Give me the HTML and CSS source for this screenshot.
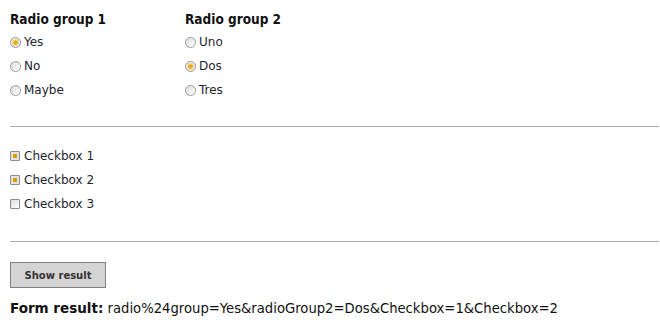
FILE: index.html
```html
<!DOCTYPE html>
<html lang="en">
<head>
    <meta charset="UTF-8">
    <title>Form</title>
    <link rel="stylesheet" href="styles.css">
</head>
<body>
    <form class="form" id="demoForm">
        <div class="groups">
            <div class="group">
                <h2>Radio group 1</h2>
                <label class="option"><input type="radio" name="radio$group" value="Yes" checked> Yes</label>
                <label class="option"><input type="radio" name="radio$group" value="No"> No</label>
                <label class="option"><input type="radio" name="radio$group" value="Maybe"> Maybe</label>
            </div>
            <div class="group">
                <h2>Radio group 2</h2>
                <label class="option"><input type="radio" name="radioGroup2" value="Uno"> Uno</label>
                <label class="option"><input type="radio" name="radioGroup2" value="Dos" checked> Dos</label>
                <label class="option"><input type="radio" name="radioGroup2" value="Tres"> Tres</label>
            </div>
        </div>
        <hr>
        <div class="checks">
            <label class="option"><input type="checkbox" name="Checkbox" value="1" checked> Checkbox 1</label>
            <label class="option"><input type="checkbox" name="Checkbox" value="2" checked> Checkbox 2</label>
            <label class="option"><input type="checkbox" name="Checkbox" value="3"> Checkbox 3</label>
        </div>
        <hr>
        <button type="submit" class="button">Show result</button>
        <p class="result"><strong>Form result:</strong> <span id="result">radio%24group=Yes&amp;radioGroup2=Dos&amp;Checkbox=1&amp;Checkbox=2</span></p>
    </form>
</body>
</html>
```

FILE: styles.css
```css
body {
    font-family: "DejaVu Sans", Verdana, sans-serif;
    font-size: 12px;
    color: #1e2430;
    background-color: #ffffff;
    margin: 0;
    padding: 10px 1px 10px 10px;
}

.groups {
    display: flex;
}

.group {
    width: 175px;
}

h2 {
    font-family: "DejaVu Sans Condensed", "DejaVu Sans", sans-serif;
    font-size: 13.5px;
    font-weight: bold;
    color: #111;
    margin: 1px 0 3px 0;
}

.option {
    display: flex;
    align-items: center;
    height: 24px;
    gap: 3px;
}

input[type="radio"],
input[type="checkbox"] {
    appearance: none;
    margin: 0;
    width: 11px;
    height: 11px;
    border: 1px solid #9a9a9a;
    background: linear-gradient(135deg, #dcdcdc, #ffffff);
}

input[type="radio"] {
    border-radius: 50%;
}

input[type="checkbox"] {
    width: 10px;
    height: 10px;
    margin-right: 1px;
    border-radius: 1px;
    border-color: #8a8a8a;
}

input[type="radio"]:checked {
    background: radial-gradient(circle, #d89800 0, #f0c030 2px, #e8dcc0 3px, #f0f0f0 5px);
}

input[type="checkbox"]:checked {
    background: #ececec;
    box-shadow: inset 0 0 0 2px #e4e4e4, inset 0 0 0 5px #d89a00;
}

hr {
    border: 0;
    border-top: 1px solid #aaaaaa;
    margin: 24px 0 17px 0;
}

.checks + hr {
    margin-top: 25px;
}

.button {
    font-family: "DejaVu Sans", Verdana, sans-serif;
    font-size: 10px;
    font-weight: bold;
    color: #333;
    width: 96px;
    height: 26px;
    margin-top: 3px;
    background-color: #d4d4d4;
    border: 1px solid #808080;
}

.result {
    font-size: 13.2px;
    margin: 12px 0 0 0;
    color: #111;
}

.result strong {
    font-size: 13.5px;
}
```
